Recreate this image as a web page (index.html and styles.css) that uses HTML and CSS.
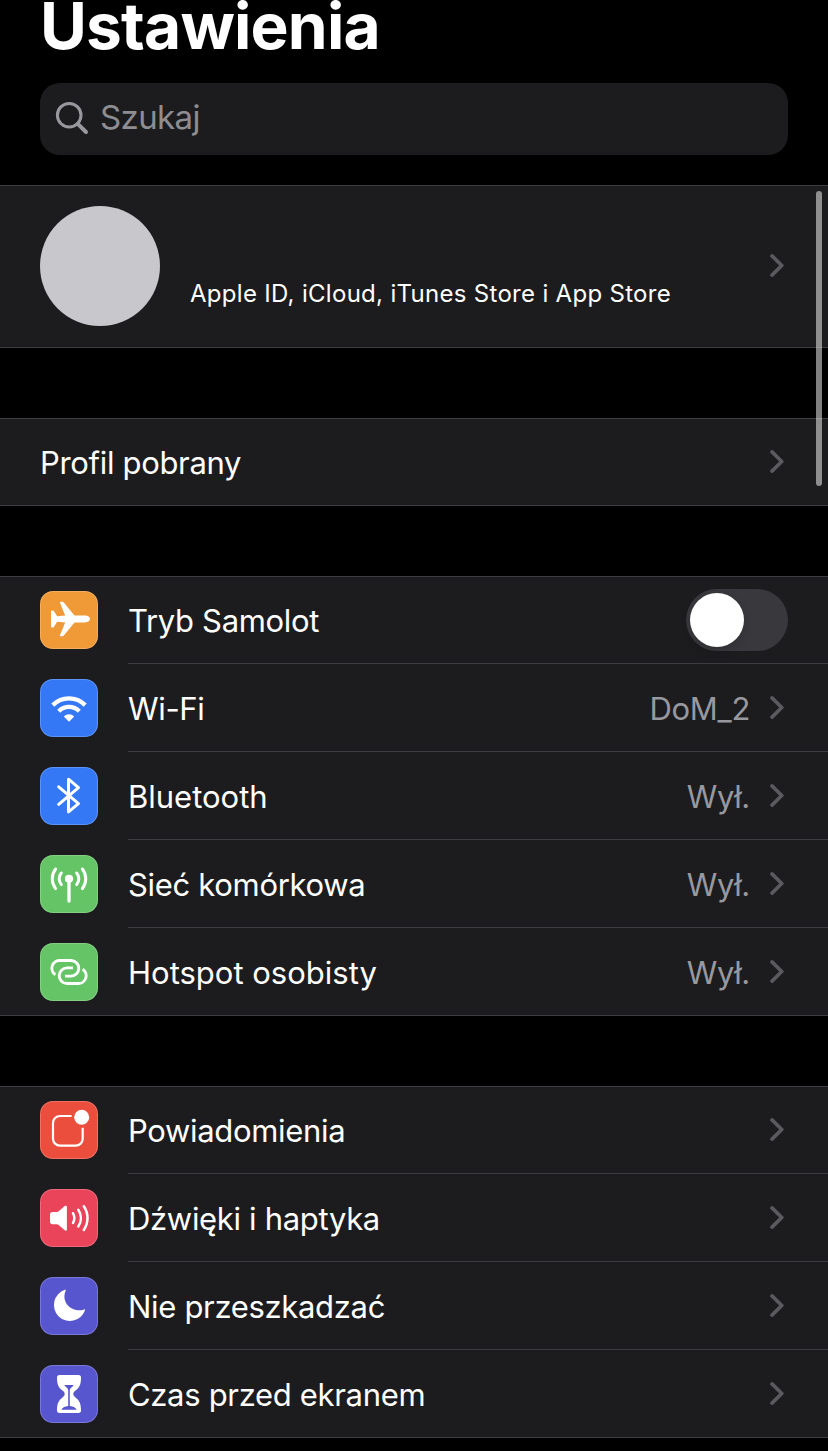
FILE: index.html
```html
<!DOCTYPE html>
<html lang="pl">
<head>
  <meta charset="UTF-8" />
  <meta name="viewport" content="width=device-width, initial-scale=1.0" />
  <title>Ustawienia</title>
  <link rel="stylesheet" href="styles.css">
</head>
<body>
  <svg class="sprite">
    <symbol id="chevron" viewBox="0 0 16 23">
      <path d="M3 1.9l9.800 9.600L3 21.1" fill="none" stroke="#5b5b5f" stroke-width="3.6" stroke-linecap="round" stroke-linejoin="round" />
    </symbol>
  </svg>

  <div class="screen">
    <h1 class="title">Ustawienia</h1>

    <div class="search">
      <svg class="search-icon" viewBox="0 0 34 34">
        <circle cx="14.2" cy="14.2" r="11.8" />
        <path d="M22.8 22.8L31 31" stroke-width="4" />
      </svg>
      <span>Szukaj</span>
    </div>

    <section class="group profile">
      <div class="avatar"></div>
      <div class="profile-text">Apple ID, iCloud, iTunes Store i App Store</div>
      <svg class="chevron"><use href="#chevron" /></svg>
    </section>

    <section class="group">
      <div class="row">
        <div class="row-body">
          <span class="label">Profil pobrany</span>
          <svg class="chevron"><use href="#chevron" /></svg>
        </div>
      </div>
    </section>

    <section class="group">
      <div class="row">
        <svg class="icon orange" viewBox="0 0 58 58">
          <path class="fill" d="M34.5 24.6H45c3 0 5 1.7 5 3.4s-2 3.4-5 3.4H34.5L24 44.2c-.6.8-1.2 1-2 1h-1.2c-.8 0-1.1-.6-.8-1.3l5.2-12.5-8-.6-3.2 5c-.4.6-.8.8-1.4.8h-.8c-.5 0-.8-.3-.8-.8V20.2c0-.5.3-.8.8-.8h.8c.6 0 1 .2 1.4.8l3.2 5 8-.6L20 12.1c-.3-.7 0-1.3.8-1.3H22c.8 0 1.4.2 2 1z" />
        </svg>
        <div class="row-body">
          <span class="label">Tryb Samolot</span>
          <div class="switch"><div class="knob"></div></div>
        </div>
      </div>
      <div class="row">
        <svg class="icon blue" viewBox="0 0 58 58">
          <path class="line butt" stroke-width="4.3" d="M12.8 26.1a23 23 0 0 1 32.4 0" />
          <path class="line butt" stroke-width="4.3" d="M18.7 32.2a14.5 14.5 0 0 1 20.6 0" />
          <path class="fill" d="M29 42.8l-5.2-5.3a7.4 7.4 0 0 1 10.4 0z" />
        </svg>
        <div class="row-body">
          <span class="label">Wi-Fi</span>
          <span class="value">DoM_2</span>
          <svg class="chevron"><use href="#chevron" /></svg>
        </div>
      </div>
      <div class="row">
        <svg class="icon blue" viewBox="0 0 58 58">
          <path class="line" stroke-width="3" d="M18.7 19.8l19.8 16.8-10 8.2V12.2l10 8.4-19.8 16.8" />
        </svg>
        <div class="row-body">
          <span class="label loose">Bluetooth</span>
          <span class="value">Wył.</span>
          <svg class="chevron"><use href="#chevron" /></svg>
        </div>
      </div>
      <div class="row">
        <svg class="icon green" viewBox="0 0 58 58">
          <circle class="fill" cx="29" cy="23.8" r="4.1" />
          <path class="line" stroke-width="3.3" d="M29 24v22" />
          <path class="line" stroke-width="3" d="M15.6 14a16 16 0 0 0 0 19.6M21.3 18a9 9 0 0 0 0 11.6M42.4 14a16 16 0 0 1 0 19.6M36.7 18a9 9 0 0 1 0 11.6" />
        </svg>
        <div class="row-body">
          <span class="label">Sieć komórkowa</span>
          <span class="value">Wył.</span>
          <svg class="chevron"><use href="#chevron" /></svg>
        </div>
      </div>
      <div class="row">
        <svg class="icon green" viewBox="0 0 58 58">
          <path class="line butt" stroke-width="2.9" d="M15.4 31.8A7.8 7.8 0 0 1 20.5 17.5H31a7.8 7.8 0 0 1 0 15.6h-6" />
          <path class="line butt" stroke-width="2.9" d="M42.6 26.2a7.8 7.8 0 0 1-5.1 14.3H27a7.8 7.8 0 0 1 0-15.6h6" />
        </svg>
        <div class="row-body">
          <span class="label loose">Hotspot osobisty</span>
          <span class="value">Wył.</span>
          <svg class="chevron"><use href="#chevron" /></svg>
        </div>
      </div>
    </section>

    <section class="group">
      <div class="row">
        <svg class="icon red" viewBox="0 0 58 58">
          <path class="line butt" stroke-width="2.2" d="M31.6 15H20a7 7 0 0 0-7 7v15.7a7 7 0 0 0 7 7h15.7a7 7 0 0 0 7-7V26.7" />
          <circle class="fill" cx="41.7" cy="16.3" r="7.5" />
        </svg>
        <div class="row-body">
          <span class="label">Powiadomienia</span>
          <svg class="chevron"><use href="#chevron" /></svg>
        </div>
      </div>
      <div class="row">
        <svg class="icon pink" viewBox="0 0 58 58">
          <path class="fill" d="M12.4 23h4.4c.8 0 1.3-.2 1.9-.7l6-5.2c.9-.8 2.2-.4 2.2.9v22.4c0 1.3-1.3 1.7-2.2.9l-6-5.4c-.6-.5-1.1-.7-1.9-.7h-4.4c-1.5 0-2.4-.9-2.4-2.4v-7.4c0-1.5.9-2.4 2.4-2.4z" />
          <path class="line" stroke-width="2.5" d="M33 24.2a10 10 0 0 1 0 9.8M38.3 20.7a15 15 0 0 1 0 16.8M43.8 17.2a21 21 0 0 1 0 23.8" />
        </svg>
        <div class="row-body">
          <span class="label">Dźwięki i haptyka</span>
          <svg class="chevron"><use href="#chevron" /></svg>
        </div>
      </div>
      <div class="row">
        <svg class="icon purple" viewBox="0 0 58 58">
          <path class="fill" d="M25.7 13.5c.3-.7-.1-1-.8-.7A16 16 0 1 0 45 33.3c.3-.8 0-1.2-.7-.9C32 36.5 20.5 25.5 25.7 13.5z" />
        </svg>
        <div class="row-body">
          <span class="label">Nie przeszkadzać</span>
          <svg class="chevron"><use href="#chevron" /></svg>
        </div>
      </div>
      <div class="row">
        <svg class="icon purple" viewBox="0 0 58 58">
          <path class="fill" d="M19.5 10h19c1.7 0 2.5.9 2.5 2.5 0 7-1.5 10-5.5 13.1-1.5 1.2-2.2 2.2-2.2 3.4s.7 2.2 2.2 3.4C39.5 35.5 41 38.5 41 45.5c0 1.6-.8 2.5-2.5 2.5h-19c-1.7 0-2.5-.9-2.5-2.5 0-7 1.5-10 5.5-13.1 1.5-1.2 2.2-2.2 2.2-3.4s-.7-2.2-2.2-3.4C18.5 22.5 17 19.5 17 12.5c0-1.6.8-2.5 2.5-2.5z" />
          <path class="sand" d="M24.3 20h9.4c-.6 1.8-3.6 2.6-3.9 5v16c3.5.6 6.2 1.8 6.9 3.8H21.3c.7-2 3.4-3.2 6.9-3.8V25c-.3-2.4-3.3-3.2-3.9-5z" />
        </svg>
        <div class="row-body">
          <span class="label">Czas przed ekranem</span>
          <svg class="chevron"><use href="#chevron" /></svg>
        </div>
      </div>
    </section>

    <div class="scrollbar"></div>
  </div>
</body>
</html>
```

FILE: styles.css
```css
body {
  margin: 0;
  background-color: #000;
  color: #fff;
  font-family: Inter, 'Liberation Sans', sans-serif;
}
.sprite {
  display: none;
}
.screen {
  position: relative;
  height: 1451px;
  overflow: hidden;
}
.title {
  margin: 0 40px;
  height: 83px;
  line-height: 52px;
  font-size: 64px;
  font-weight: 700;
  letter-spacing: -0.8px;
}
.search {
  display: flex;
  align-items: center;
  gap: 11px;
  box-sizing: border-box;
  height: 72px;
  margin: 0 40px 30px;
  padding: 0 15px 2px;
  border-radius: 20px;
  background-color: #1c1c1e;
  color: #8d8d92;
  font-size: 33px;
  letter-spacing: -0.6px;
}
.search span {
  padding-bottom: 2px;
}
.search-icon {
  width: 34px;
  height: 34px;
  fill: none;
  stroke: #98989f;
  stroke-width: 3;
  stroke-linecap: round;
}
.group {
  margin-bottom: 70px;
  background-color: #1c1c1e;
  box-shadow: inset 0 1px #3d3d41, inset 0 -1px #3d3d41;
}
.profile {
  display: flex;
  align-items: center;
  box-sizing: border-box;
  height: 163px;
  padding: 0 43px 2px 40px;
}
.avatar {
  width: 120px;
  height: 120px;
  margin: 1px 30px 0 0;
  border-radius: 50%;
  background-color: #c7c7cc;
}
.profile-text {
  flex: 1;
  padding-top: 56px;
  font-size: 24px;
  letter-spacing: 0.3px;
}
.row {
  display: flex;
  align-items: center;
  height: 88px;
  padding-left: 40px;
}
.row-body {
  display: flex;
  flex: 1;
  align-items: center;
  box-sizing: border-box;
  height: 88px;
  padding-right: 43px;
  border-bottom: 1px solid #3d3d41;
}
.row:last-child .row-body {
  border-bottom-color: transparent;
}
.label {
  flex: 1;
  padding-top: 1px;
  font-size: 31px;
  letter-spacing: -0.32px;
}
.label.loose {
  letter-spacing: 0;
}
.value {
  padding-top: 1px;
  margin-right: 19px;
  color: #98989f;
  font-size: 31px;
  letter-spacing: -0.3px;
}
.chevron {
  width: 16px;
  height: 23px;
}
.icon {
  box-sizing: border-box;
  width: 58px;
  height: 58px;
  margin-right: 30px;
  border-radius: 13px;
  box-shadow: inset 0 0 0 1px rgba(255,255,255,0.2);
}
.icon .fill {
  fill: #fff;
}
.icon .line {
  fill: none;
  stroke: #fff;
  stroke-linecap: round;
  stroke-linejoin: round;
}
.icon .butt {
  stroke-linecap: butt;
}
.icon .sand {
  fill: #5856ce;
}
.orange {
  background-color: #f09a37;
}
.blue {
  background-color: #3478f6;
}
.green {
  background-color: #65c466;
}
.red {
  background-color: #eb4e3d;
}
.pink {
  background-color: #ea445a;
}
.purple {
  background-color: #5856ce;
}
.switch {
  width: 94px;
  height: 54px;
  margin-right: -3px;
  padding: 4px;
  border-radius: 31px;
  background-color: #39393d;
}
.knob {
  width: 54px;
  height: 54px;
  border-radius: 50%;
  background-color: #fff;
  box-shadow: 0 4px 10px rgba(0,0,0,0.15);
}
.scrollbar {
  position: absolute;
  top: 191px;
  right: 6px;
  width: 6px;
  height: 295px;
  border-radius: 3px;
  background-color: rgba(255,255,255,0.5);
}
```
